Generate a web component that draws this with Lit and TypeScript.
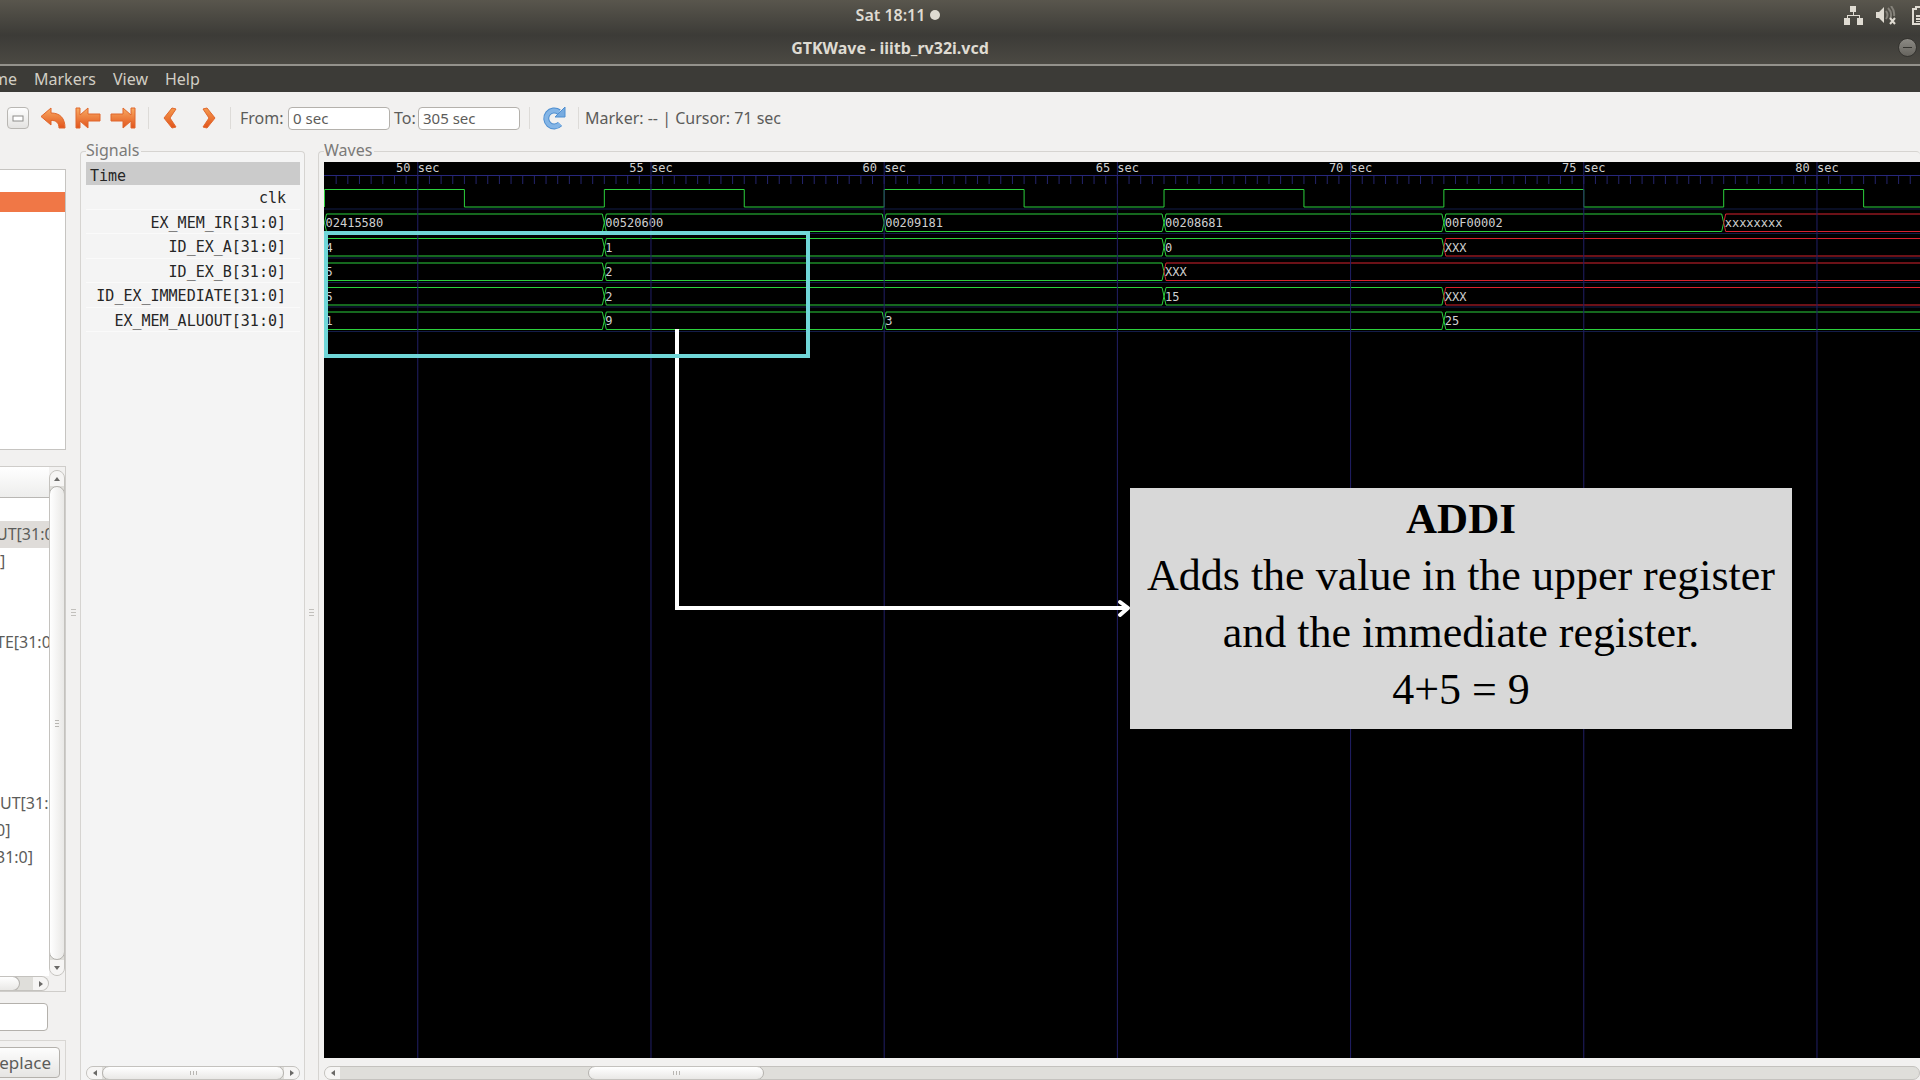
import { LitElement, html, svg, css, nothing } from "lit";
import { customElement } from "lit/decorators.js";

interface Change {
  at: number;
  value: string;
  unknown?: boolean;
}

const START = 48;
const END = 126;
const PX_PER_SEC = 46.64;
const ROW = 24.5;
const FIRST_ROW = 22.5;

const SIGNALS = [
  "clk",
  "EX_MEM_IR[31:0]",
  "ID_EX_A[31:0]",
  "ID_EX_B[31:0]",
  "ID_EX_IMMEDIATE[31:0]",
  "EX_MEM_ALUOUT[31:0]",
];

const BUSES: Change[][] = [
  [
    { at: 48, value: "02415580" },
    { at: 54, value: "00520600" },
    { at: 60, value: "00209181" },
    { at: 66, value: "00208681" },
    { at: 72, value: "00F00002" },
    { at: 78, value: "xxxxxxxx", unknown: true },
  ],
  [
    { at: 48, value: "4" },
    { at: 54, value: "1" },
    { at: 66, value: "0" },
    { at: 72, value: "XXX", unknown: true },
  ],
  [
    { at: 48, value: "5" },
    { at: 54, value: "2" },
    { at: 66, value: "XXX", unknown: true },
  ],
  [
    { at: 48, value: "5" },
    { at: 54, value: "2" },
    { at: 66, value: "15" },
    { at: 72, value: "XXX", unknown: true },
  ],
  [
    { at: 48, value: "1" },
    { at: 54, value: "9" },
    { at: 60, value: "3" },
    { at: 72, value: "25" },
  ],
];

// Visible part of the signal tree; the pane is scrolled sideways.
const TREE = [
  { text: "UT[31:0]", cut: true, selected: true },
  { text: "]" },
  { text: "" },
  { text: "" },
  { text: "TE[31:0]", cut: true },
  { text: "" },
  { text: "" },
  { text: "" },
  { text: "" },
  { text: "" },
  { text: "UT[31:0]" },
  { text: "0]", cut: true },
  { text: "31:0]", cut: true },
] as { text: string; cut?: boolean; selected?: boolean }[];

const timeX = (t: number) => (t - START) * PX_PER_SEC + 0.5;

function range(from: number, to: number, step: number): number[] {
  const out: number[] = [];
  for (let v = from; v <= to; v += step) out.push(v);
  return out;
}

@customElement("wave-canvas")
class WaveCanvas extends LitElement {
  static styles = css`
    :host {
      display: block;
      position: relative;
      flex: 1;
      min-height: 0;
      overflow: hidden;
      background: #000;
    }
    .plot {
      position: absolute;
      inset: 0;
      width: 100%;
      height: 100%;
    }
    .plot text {
      font: 12px "DejaVu Sans Mono", monospace;
      fill: #d0d0d0;
    }
    .grid { stroke: #211f66; }
    .ruler { stroke: #27277c; }
    .tick { stroke: #24246c; }
    .base { stroke: #131c48; }
    .wave { fill: none; stroke: #2bd03c; }
    .bad { stroke: #d8222e; }
    .frame { fill: none; stroke: #70d6d8; stroke-width: 4; }
    .arrow { fill: none; stroke: #fff; stroke-width: 4; }
    .head { stroke-linecap: round; stroke-linejoin: round; }
    .note {
      position: absolute;
      left: 806px;
      top: 326px;
      width: 662px;
      height: 241px;
      box-sizing: border-box;
      padding-top: 2px;
      background: #d8d8d8;
      color: #000;
      text-align: center;
      font: 44px/57px "Liberation Serif", "Times New Roman", serif;
    }
    .note h2 {
      margin: 0;
      font-size: 43px;
      line-height: 57px;
    }
    .note p { margin: 0; }
  `;

  private clock() {
    let d = `M${timeX(48)} ${FIRST_ROW + 22.5}`;
    for (let t = 48; t < END; t += 6) {
      d += `V${FIRST_ROW + 5}H${timeX(t + 3)}V${FIRST_ROW + 22.5}H${timeX(t + 6)}`;
    }
    return svg`<path class="wave" d=${d}></path>`;
  }

  private bus(changes: Change[], row: number) {
    const top = FIRST_ROW + row * ROW + 5;
    const bottom = top + 17.5;
    return changes.map((c, i) => {
      const next = changes[i + 1];
      const x1 = timeX(c.at);
      const x2 = timeX(next ? next.at : END);
      const mid = (top + bottom) / 2;
      const d =
        `M${x2} ${mid}L${x2 - 2} ${top}H${x1 + 2}L${x1} ${mid}` +
        `L${x1 + 2} ${bottom}H${x2 - 2}Z`;
      return svg`
        <path class="wave ${c.unknown ? "bad" : ""}" d=${d}></path>
        <text x=${x1 + 1} y=${top + 13}>${c.value}</text>`;
    });
  }

  render() {
    const marks = range(50, END, 5);
    return html`
      <svg class="plot" role="img" aria-label="Waveforms">
        ${range(1, 6, 1).map((r) => svg`<line class="base" x1="0" x2="100%"
          y1=${FIRST_ROW + r * ROW} y2=${FIRST_ROW + r * ROW}></line>`)}
        <line class="ruler" x1="0" x2="100%" y1="13.5" y2="13.5"></line>
        ${range(48.25, END, 0.25).map((t) => svg`<line class="tick"
          x1=${timeX(t)} x2=${timeX(t)} y1="14" y2="22"></line>`)}
        ${this.clock()}
        ${BUSES.map((b, i) => this.bus(b, i + 1))}
        ${marks.map((t) => svg`
          <line class="grid" x1=${timeX(t)} x2=${timeX(t)} y1="0" y2="100%"></line>
          <text x=${timeX(t)} y="10" text-anchor="middle">${t} sec</text>`)}
        <path class="arrow" d="M353 167V446H804"></path>
        <path class="arrow head" d="M796 440L804 446L796 453"></path>
        <rect class="frame" x="2" y="71" width="482" height="123"></rect>
      </svg>
      <section class="note">
        <h2>ADDI</h2>
        <p>Adds the value in the upper register</p>
        <p>and the immediate register.</p>
        <p>4+5 = 9</p>
      </section>
    `;
  }
}

@customElement("app-root")
class AppRoot extends LitElement {
  static styles = css`
    :host {
      display: flex;
      flex-direction: column;
      height: 100vh;
      overflow: hidden;
      background: #f2f1f0;
      color: #5c5c5a;
      font: 16px/20px "Noto Sans", "Open Sans", sans-serif;
    }
    * { box-sizing: border-box; }
    button, input { font: inherit; color: inherit; }
    svg { display: block; flex: none; }

    .system {
      display: flex;
      align-items: center;
      height: 35px;
      flex: none;
      padding-bottom: 5px;
      background: linear-gradient(#59564d, #3c3b37);
      color: #dfdbd2;
    }
    .clock {
      flex: 1;
      display: flex;
      align-items: center;
      justify-content: center;
      gap: 5px;
      padding-right: 48px;
      font-weight: 600;
    }
    .dot {
      width: 10px;
      height: 10px;
      border-radius: 50%;
      background: #dfdbd2;
    }
    .tray {
      display: flex;
      gap: 13px;
      width: 76px;
      overflow: hidden;
    }
    .title {
      display: flex;
      align-items: center;
      height: 31px;
      flex: none;
      padding-bottom: 4px;
      background: linear-gradient(#3c3b37, #4b4943);
      border-bottom: 2px solid #94928c;
      color: #dfdbd2;
    }
    .title h1 {
      flex: 1;
      margin: 0;
      padding-right: 118px;
      text-align: center;
      font-size: 16px;
      font-weight: 700;
    }
    .minimize {
      width: 19px;
      height: 19px;
      margin-right: 3px;
      padding: 0;
      display: grid;
      place-items: center;
      border: 1px solid #34332f;
      border-radius: 50%;
      background: linear-gradient(#8c8a84, #66645e);
    }
    .menu {
      display: flex;
      gap: 17px;
      height: 26px;
      flex: none;
      align-items: center;
      margin-left: -20px;
      background: #3c3b37;
      color: #d2cec4;
    }
    .menu button {
      border: 0;
      padding: 0 0 1px;
      background: none;
    }

    .toolbar {
      display: flex;
      align-items: center;
      height: 52px;
      flex: none;
      padding-left: 7px;
    }
    .tool {
      border: 0;
      padding: 0;
      background: none;
    }
    .fit {
      width: 22px;
      height: 22px;
      display: grid;
      place-items: center;
      border: 1px solid #b9b7b3;
      border-radius: 4px;
      background: linear-gradient(#fefefe, #e4e3e1);
    }
    .tools {
      display: flex;
      gap: 9px;
      padding: 0 12px 0 11px;
    }
    .chevrons {
      display: flex;
      gap: 25px;
      padding: 0 14px;
    }
    .rule {
      width: 1px;
      height: 22px;
      background: #dddbd8;
    }
    .field {
      display: flex;
      align-items: center;
      justify-content: space-between;
    }
    .from { width: 150px; margin-left: 9px; }
    .to { width: 126px; margin: 0 9px 0 4px; }
    .field input {
      width: 102px;
      height: 23px;
      padding: 0 4px;
      border: 1px solid #b4b1ac;
      border-radius: 4px;
      background: #fff;
      font-size: 15px;
    }
    .reload { margin: 0 12px; }
    .status { margin-left: 6px; }

    .main {
      display: flex;
      flex: 1;
      min-height: 0;
    }
    .side {
      width: 66px;
      flex: none;
      display: flex;
      flex-direction: column;
      padding-top: 25px;
      overflow: hidden;
    }
    .modules {
      height: 281px;
      flex: none;
      padding-top: 22px;
      margin-bottom: 16px;
      border: 1px solid #c6c4c1;
      border-width: 1px 1px 1px 0;
      background: #fff;
    }
    .current {
      height: 20px;
      background: #f07746;
    }
    .tree {
      flex: 1;
      min-height: 0;
      display: grid;
      grid-template-columns: 1fr 16px;
      grid-template-rows: 1fr 15px;
      border: 1px solid #cfcdca;
      border-width: 1px 1px 1px 0;
    }
    .names {
      background: #fff;
      overflow: hidden;
    }
    .heading {
      height: 31px;
      border-bottom: 1px solid #b9b7b4;
      background: linear-gradient(#fff, #ededec);
    }
    .rows {
      margin: 23px 0 0;
      padding: 0;
      list-style: none;
      height: 349px;
      display: grid;
      grid-template-rows: repeat(13, 1fr);
    }
    .rows li {
      display: flex;
      align-items: center;
      white-space: nowrap;
    }
    .rows .cut { text-indent: -4px; }
    .rows .selected { background: #dfdcd9; }
    .search {
      width: 68px;
      height: 28px;
      flex: none;
      margin: 11px 0 9px -20px;
      border: 1px solid #b4b1ac;
      border-radius: 4px;
      background: #fff;
    }
    .actions {
      height: 40px;
      flex: none;
      display: flex;
      justify-content: flex-end;
      padding: 6px 5px 2px 0;
      border: 1px solid #d8d6d3;
      border-width: 1px 1px 0 0;
    }
    .replace {
      flex: none;
      padding: 0 8px;
      font-size: 17px;
      border: 1px solid #b4b1ac;
      border-radius: 4px;
      background: linear-gradient(#fdfdfd, #e6e5e3);
    }

    .bar {
      display: flex;
      border-radius: 8px;
      background: #dfdeda;
      border: 1px solid #c4c2be;
      overflow: hidden;
      flex: none;
    }
    .bar button {
      flex: none;
      display: grid;
      place-items: center;
      padding: 0;
      border: 0;
      background: #f6f5f4;
    }
    .thumb {
      display: flex;
      align-items: center;
      justify-content: center;
      gap: 2px;
      border: 1px solid #b4b2ae;
      border-radius: 8px;
    }
    .thumb i { background: #b8b6b2; }
    .across { height: 14px; }
    .across button { width: 15px; }
    .across .thumb { background: linear-gradient(#fff, #e9e8e6); margin: -1px 0; }
    .across .thumb i { width: 1px; height: 4px; }
    .down {
      flex-direction: column;
      margin-top: 3px;
    }
    .down button { height: 15px; }
    .down .thumb {
      flex: 1;
      flex-direction: column;
      background: linear-gradient(to right, #fff, #e9e8e6);
      margin: 0 -1px;
    }
    .down .thumb i { width: 4px; height: 1px; }
    .tree .across {
      height: 15px;
      border-radius: 0 8px 8px 0;
      border-left: 0;
    }
    .tree .thumb.left {
      width: 20px;
      border-left: 0;
      border-radius: 0 8px 8px 0;
      margin-right: auto;
    }

    .grip {
      flex: none;
      width: 13px;
      display: flex;
      flex-direction: column;
      justify-content: center;
      align-items: center;
      gap: 2px;
    }
    .grip.wide { width: 14px; }
    .grip i {
      width: 5px;
      height: 1px;
      background: #c2c0bc;
    }
    .panel {
      margin: 0;
      min-width: 0;
      display: flex;
      flex-direction: column;
      border: 1px solid #d6d4d1;
      border-bottom: 0;
      border-radius: 4px 4px 0 0;
      padding: 4px 4px 0 5px;
      color: #7b7a78;
    }
    .panel legend {
      padding: 0 2px 2px 0;
      line-height: 12px;
    }
    .panel .across {
      margin-top: 8px;
    }
    .signals {
      width: 225px;
      flex: none;
      background: #f4f4f4;
    }
    .waves {
      flex: 1;
      padding-right: 0;
      border-right: 0;
    }
    .time {
      height: 23px;
      flex: none;
      padding-left: 4px;
      background: #cbcbcb;
      color: #262626;
      font: 15px/28px "DejaVu Sans Mono", monospace;
    }
    .list {
      margin: 0;
      padding: 0;
      list-style: none;
      height: 147px;
      display: grid;
      grid-template-rows: repeat(6, 1fr);
      color: #262626;
      font: 15px/20px "DejaVu Sans Mono", monospace;
    }
    .list li {
      display: flex;
      align-items: center;
      justify-content: flex-end;
      padding: 3px 14px 0 0;
      border-bottom: 1px solid #fafafa;
      white-space: nowrap;
    }
    .space { flex: 1; }
    .waves .thumb { width: 176px; margin-left: 248px; }
    .signals .thumb { flex: 1; }
  `;

  private arrow(d: string) {
    return html`<svg width="8" height="8" viewBox="0 0 8 8"><path fill="#6a6967" d=${d}></path></svg>`;
  }

  private grips() {
    return html`<i></i><i></i><i></i>`;
  }

  render() {
    return html`
      <header class="system">
        <div class="clock"><span>Sat 18:11</span><span class="dot"></span></div>
        <div class="tray">
          <svg width="19" height="19" viewBox="0 0 19 19" fill="#dfdbd2">
            <path d="M6 0h6v6H6zM0 12h6v7H0zM13 12h6v7h-6z" />
            <path d="M9 6h1v3h6v3h-1v-2H4v2H3V9h6z" />
          </svg>
          <svg width="21" height="19" viewBox="0 0 21 19">
            <path fill="#dfdbd2" d="M0 6h3l5-5v16l-5-5H0z" />
            <path fill="none" stroke="#85827a" stroke-width="2" d="M10 5q3 4 0 8M12 2q5 5 2 11M15 0q4 5 3 10" />
            <path stroke="#dfdbd2" stroke-width="2" d="M14 12l5 6M19 12l-5 6" />
          </svg>
          <svg width="16" height="19" viewBox="0 0 16 19">
            <path fill="none" stroke="#dfdbd2" stroke-width="2" d="M3 3h3V1h5v2h3v15H3z" />
            <path fill="#dfdbd2" d="M6 9h6v2H6zM6 12h6v2H6zM6 15h6v1H6z" />
          </svg>
        </div>
      </header>
      <div class="title">
        <h1>GTKWave - iiitb_rv32i.vcd</h1>
        <button class="minimize" aria-label="Minimize">
          <svg width="9" height="2"><rect width="9" height="1" fill="#35342f" /></svg>
        </button>
      </div>
      <nav class="menu">
        <button>Time</button><button>Markers</button><button>View</button><button>Help</button>
      </nav>

      <div class="toolbar">
        <button class="tool fit" aria-label="Zoom fit">
          <svg width="12" height="7"><rect x="1" y="1" width="10" height="5" fill="#fff" stroke="#8d8c8a" /></svg>
        </button>
        <div class="tools">
          <button class="tool" aria-label="Zoom undo">
            <svg width="26" height="22" viewBox="0 0 26 22">
              <defs><linearGradient id="a" x2="0" y2="1"><stop stop-color="#f8ab62" /><stop offset="1" stop-color="#e2541c" /></linearGradient></defs>
              <path fill="url(#a)" stroke="#e0672c" stroke-linejoin="round" d="M1 9.5L11 1v5c9 0 14 5 14 15h-6c0-5-3-8-8-7.500V18z" />
            </svg>
          </button>
          <button class="tool" aria-label="Zoom to start">
            <svg width="26" height="22" viewBox="0 0 26 22">
              <defs><linearGradient id="b" x2="0" y2="1"><stop stop-color="#f8ab62" /><stop offset="1" stop-color="#e2541c" /></linearGradient></defs>
              <path fill="url(#b)" stroke="#e0672c" stroke-linejoin="round" d="M1 1h4v7l8-7v6h12v7H13v7l-8-7v7H1z" />
            </svg>
          </button>
          <button class="tool" aria-label="Zoom to end">
            <svg width="26" height="22" viewBox="0 0 26 22">
              <defs><linearGradient id="c" x2="0" y2="1"><stop stop-color="#f8ab62" /><stop offset="1" stop-color="#e2541c" /></linearGradient></defs>
              <path fill="url(#c)" stroke="#e0672c" stroke-linejoin="round" d="M25 1h-4v7l-8-7v6H1v7h12v7l8-7v7h4z" />
            </svg>
          </button>
        </div>
        <div class="rule"></div>
        <div class="chevrons">
          <button class="tool" aria-label="Previous edge">
            <svg width="14" height="22" viewBox="0 0 14 22">
              <defs><linearGradient id="d" x2="0" y2="1"><stop stop-color="#f59a4e" /><stop offset="1" stop-color="#e2541c" /></linearGradient></defs>
              <path fill="url(#d)" stroke="#e0672c" stroke-linejoin="round" d="M9 1l4 1-6 9 6 9-4 1-8-10z" />
            </svg>
          </button>
          <button class="tool" aria-label="Next edge">
            <svg width="14" height="22" viewBox="0 0 14 22">
              <defs><linearGradient id="e" x2="0" y2="1"><stop stop-color="#f59a4e" /><stop offset="1" stop-color="#e2541c" /></linearGradient></defs>
              <path fill="url(#e)" stroke="#e0672c" stroke-linejoin="round" d="M5 1L1 2l6 9-6 9 4 1 8-10z" />
            </svg>
          </button>
        </div>
        <div class="rule"></div>
        <div class="field from"><label for="from">From:</label><input id="from" .value=${"0 sec"} /></div>
        <div class="field to"><label for="to">To:</label><input id="to" .value=${"305 sec"} /></div>
        <div class="rule"></div>
        <button class="tool reload" aria-label="Reload">
          <svg width="24" height="24" viewBox="0 0 24 24">
            <path fill="none" stroke="#4f8fd0" stroke-width="6" d="M18 18a8 8 0 1 1-1-12" />
            <path fill="none" stroke="#84b5e6" stroke-width="4" d="M18 18a8 8 0 1 1-1-12" />
            <path fill="#77abe0" stroke="#4f8fd0" stroke-linejoin="round" d="M23 1v10H13z" />
          </svg>
        </button>
        <div class="rule"></div>
        <div class="status">Marker: -- | Cursor: 71 sec</div>
      </div>

      <main class="main">
        <aside class="side">
          <div class="modules"><div class="current"></div></div>
          <div class="tree">
            <div class="names">
              <div class="heading"></div>
              <ul class="rows">
                ${TREE.map((r) => html`<li class="${r.cut ? "cut" : ""} ${r.selected ? "selected" : ""}">${r.text || nothing}</li>`)}
              </ul>
            </div>
            <div class="bar down">
              <button aria-label="Scroll up">${this.arrow("M4 2l3 4H1z")}</button>
              <div class="thumb">${this.grips()}</div>
              <button aria-label="Scroll down">${this.arrow("M4 6l3-4H1z")}</button>
            </div>
            <div class="bar across">
              <div class="thumb left"></div>
              <button aria-label="Scroll right">${this.arrow("M6 4L2 1v6z")}</button>
            </div>
          </div>
          <input class="search" aria-label="Filter" />
          <div class="actions"><button class="replace">Replace</button></div>
        </aside>
        <div class="grip wide">${this.grips()}</div>
        <fieldset class="panel signals">
          <legend>Signals</legend>
          <div class="time">Time</div>
          <ul class="list">${SIGNALS.map((s) => html`<li>${s}</li>`)}</ul>
          <div class="space"></div>
          <div class="bar across">
            <button aria-label="Scroll left">${this.arrow("M2 4l4-3v6z")}</button>
            <div class="thumb">${this.grips()}</div>
            <button aria-label="Scroll right">${this.arrow("M6 4L2 1v6z")}</button>
          </div>
        </fieldset>
        <div class="grip">${this.grips()}</div>
        <fieldset class="panel waves">
          <legend>Waves</legend>
          <wave-canvas></wave-canvas>
          <div class="bar across">
            <button aria-label="Scroll left">${this.arrow("M2 4l4-3v6z")}</button>
            <div class="thumb">${this.grips()}</div>
          </div>
        </fieldset>
      </main>
    `;
  }
}
